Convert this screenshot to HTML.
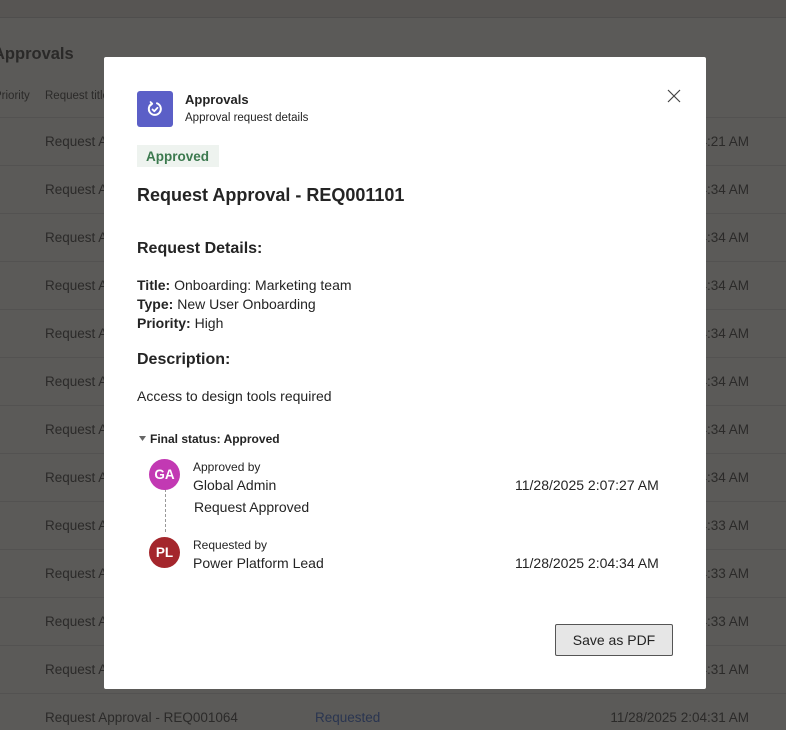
<!DOCTYPE html>
<html><head><meta charset="utf-8"><style>
*{margin:0;padding:0;box-sizing:border-box}
html,body{width:786px;height:730px;overflow:hidden}
body{background:#5b5a58;font-family:"Liberation Sans",sans-serif;position:relative;color:#242424}
.bg{position:absolute;color:#2b2a29;font-size:13.5px;white-space:nowrap}
.line{position:absolute;left:0;width:786px;height:1px;background:#535251}
.t{position:absolute;white-space:nowrap}
#m{position:absolute;left:104px;top:57px;width:602px;height:632px;background:#fff;border-radius:2px}
</style></head><body>
<div style="position:absolute;left:0;top:0;width:786px;height:17px;background:#575553"></div>
<div class="line" style="top:17px;background:#4f4e4d"></div>
<div class="bg" style="left:-7px;top:45px;font-size:16.5px;font-weight:bold;color:#2a2928">Approvals</div>
<div class="bg" style="left:-6px;top:90px;font-size:11.5px">Priority</div>
<div class="bg" style="left:45px;top:90px;font-size:11.5px">Request title</div>
<div class="line" style="top:117px"></div>
<div id="rows"></div>
<script>
var times=["2:04:21","2:04:34","2:04:34","2:04:34","2:04:34","2:04:34","2:04:34","2:04:34","2:04:33","2:04:33","2:04:33","2:04:31","2:04:31"];
var h="";
for(var i=0;i<13;i++){var y=134+i*48;
h+='<div class="bg" style="left:45px;top:'+y+'px">Request Approval - REQ0010'+(76-i)+'</div>';
h+='<div class="bg" style="left:315px;top:'+y+'px;color:#2a3550">Requested</div>';
h+='<div class="bg" style="right:37px;top:'+y+'px">11/28/2025 '+times[i]+' AM</div>';
if(i<12)h+='<div class="line" style="top:'+(y+31)+'px"></div>';}
document.getElementById("rows").innerHTML=h;
</script>
<div id="m">
<div style="position:absolute;left:33px;top:34px;width:36px;height:36px;background:#5b5fc7;border-radius:3px">
<svg width="36" height="36" viewBox="0 0 36 36"><path d="M15 12.6 A6 6 0 1 0 20 12.3" fill="none" stroke="#fff" stroke-width="2" stroke-linecap="round"/><path d="M13.5 11 L15.3 12.8 L13.3 14.6" fill="none" stroke="#fff" stroke-width="1.7" stroke-linecap="round" stroke-linejoin="round"/><path d="M15.5 18.5 L17.3 20.2 L20.5 16.8" fill="none" stroke="#fff" stroke-width="1.8" stroke-linecap="round" stroke-linejoin="round"/></svg></div>
<div class="t" style="left:81px;top:35px;font-size:13px;font-weight:bold">Approvals</div>
<div class="t" style="left:81px;top:55px;font-size:11.5px">Approval request details</div>
<svg style="position:absolute;left:563px;top:32px" width="14" height="14"><path d="M1 1L13 13M13 1L1 13" stroke="#444" stroke-width="1.2"/></svg>
<div class="t" style="left:33px;top:88px;width:82px;height:22px;background:#eef3ef;color:#3c7a4f;font-size:13.5px;font-weight:bold;padding:4px 0 0 9px">Approved</div>
<div class="t" style="left:33px;top:128px;font-size:18px;font-weight:bold">Request Approval - REQ001101</div>
<div class="t" style="left:33px;top:183px;font-size:16px;font-weight:bold">Request Details:</div>
<div class="t" style="left:33px;top:219px;font-size:14px;line-height:19px"><b>Title:</b> Onboarding: Marketing team<br><b>Type:</b> New User Onboarding<br><b>Priority:</b> High</div>
<div class="t" style="left:33px;top:294px;font-size:16px;font-weight:bold">Description:</div>
<div class="t" style="left:33px;top:331px;font-size:14px">Access to design tools required</div>
<svg style="position:absolute;left:35px;top:379px" width="8" height="6"><path d="M0 0H7L3.5 5Z" fill="#666"/></svg>
<div class="t" style="left:46px;top:375px;font-size:12px;font-weight:bold">Final status: Approved</div>
<div style="position:absolute;left:61px;top:427px;height:48px;border-left:1px dashed #999"></div>
<div class="t" style="left:45px;top:402px;width:31px;height:31px;border-radius:50%;background:#c239b3;color:#fff;font-weight:bold;font-size:13.5px;text-align:center;line-height:31px">GA</div>
<div class="t" style="left:89px;top:403px;font-size:12px">Approved by</div>
<div class="t" style="left:89px;top:420px;font-size:14px">Global Admin</div>
<div class="t" style="left:411px;top:420px;font-size:14px">11/28/2025 2:07:27 AM</div>
<div class="t" style="left:90px;top:442px;font-size:14px">Request Approved</div>
<div class="t" style="left:45px;top:480px;width:31px;height:31px;border-radius:50%;background:#a4262c;color:#fff;font-weight:bold;font-size:13.5px;text-align:center;line-height:31px">PL</div>
<div class="t" style="left:89px;top:481px;font-size:12px">Requested by</div>
<div class="t" style="left:89px;top:498px;font-size:14px">Power Platform Lead</div>
<div class="t" style="left:411px;top:498px;font-size:14px">11/28/2025 2:04:34 AM</div>
<div class="t" style="left:451px;top:567px;width:118px;height:32px;border:1px solid #555;background:#e6e6e6;border-radius:2px;font-size:14px;text-align:center;line-height:30px">Save as PDF</div>
</div>
</body></html>
